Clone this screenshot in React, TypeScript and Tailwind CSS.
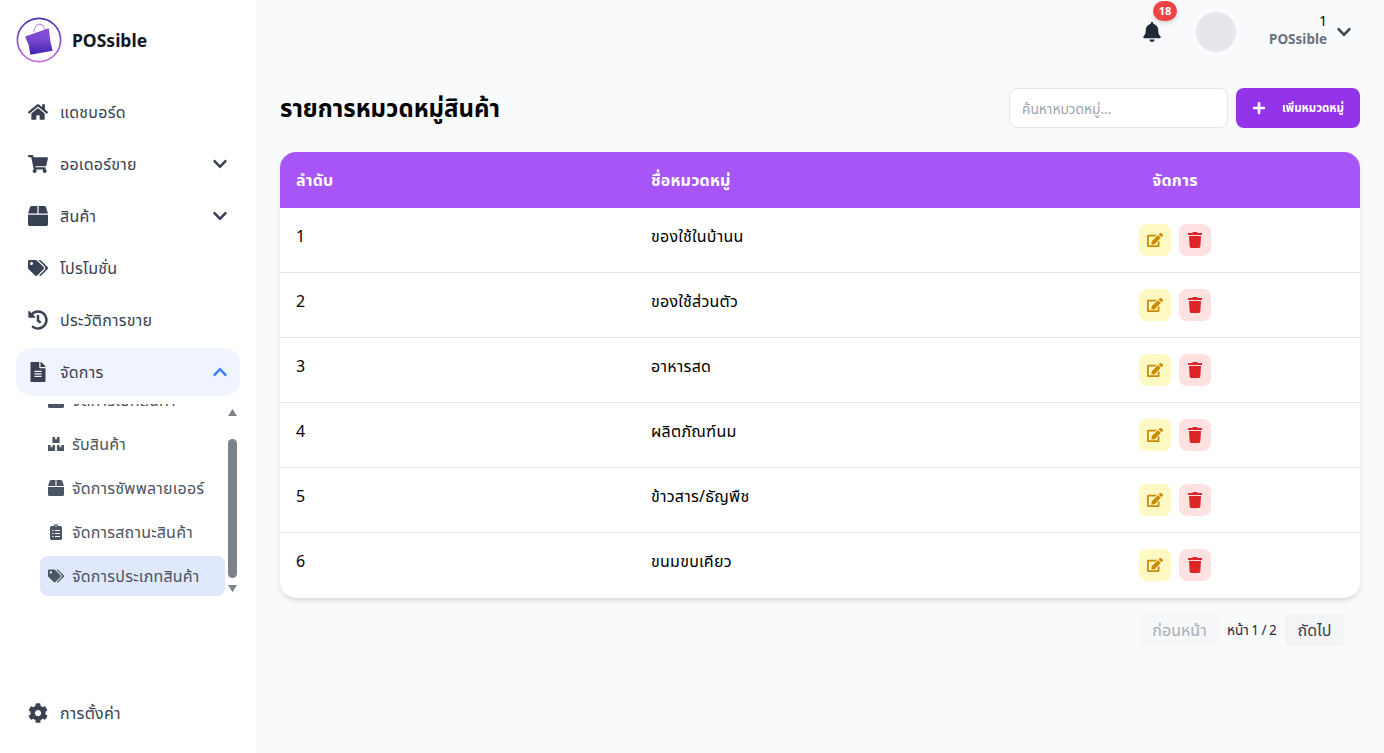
import React from "react";
import { FaHome, FaShoppingCart, FaBox, FaBoxes, FaTags, FaHistory, FaFileAlt, FaChevronDown, FaChevronUp, FaClipboardList, FaCog, FaBell, FaEdit, FaTrash, FaPlus } from "react-icons/fa";

const rows = ["ของใช้ในบ้านน", "ของใช้ส่วนตัว", "อาหารสด", "ผลิตภัณฑ์นม", "ข้าวสาร/ธัญพืช", "ขนมขบเคียว"];

function Item({ icon, label, chevron }: { icon: React.ReactNode; label: string; chevron?: boolean }) {
  return (
    <div className="flex h-12 items-center rounded-2xl px-3 text-[#374151]">
      <span className="flex w-5 justify-center text-xl">{icon}</span>
      <span className="ml-3 flex-1 text-base tracking-[0.25px]">{label}</span>
      {chevron && <FaChevronDown className="text-base" />}
    </div>
  );
}

function Sub({ icon, label, active }: { icon: React.ReactNode; label: string; active?: boolean }) {
  return (
    <div className={`flex h-10 shrink-0 items-center rounded-lg px-2 text-base tracking-[0.2px] text-[#4b5563] ${active ? "bg-[#dfe8fd]" : ""}`}>
      <span className="flex w-4 justify-center text-base">{icon}</span>
      <span className="ml-2 whitespace-nowrap">{label}</span>
    </div>
  );
}

function Actions() {
  return (
    <span className="flex justify-center gap-2">
      <span className="flex h-8 w-8 items-center justify-center rounded-lg bg-[#fef9c3] text-[#ca8a04]"><FaEdit /></span>
      <span className="flex h-8 w-8 items-center justify-center rounded-lg bg-[#fee2e2] text-[#dc2626]"><FaTrash /></span>
    </span>
  );
}

export default function App() {
  return (
    <div className="flex h-[753px] overflow-hidden bg-[#f9fafb] font-['Noto_Sans','Noto_Sans_Thai',sans-serif] text-black">
      <aside className="flex w-64 shrink-0 flex-col bg-white">
        <div className="flex h-20 items-center gap-2.5 pl-4">
          <svg viewBox="0 0 46 46" className="h-[46px] w-[46px]">
            <defs>
              <linearGradient id="ring" x1="0" y1="0" x2="0" y2="1">
                <stop offset="0" stopColor="#4c2db5" />
                <stop offset="1" stopColor="#c86de0" />
              </linearGradient>
              <linearGradient id="bag" x1="0" y1="0" x2="0" y2="1">
                <stop offset="0" stopColor="#a263e6" />
                <stop offset="1" stopColor="#3f22b0" />
              </linearGradient>
            </defs>
            <circle cx="23" cy="23" r="21.6" fill="#fff" stroke="url(#ring)" strokeWidth="1.7" />
            <path d="M17.7 15 C19 8 24 5 27 9 L29.5 13" fill="none" stroke="#b98ae8" strokeWidth="1.1" />
            <path d="M9.3 19.5 L32.7 11.2 L34.5 25 L36.7 33.8 L14.3 37.8 L12.7 28 Z" fill="url(#bag)" />
            <path d="M9.3 19.5 L32.7 11.2 L33.4 17 L11 25 Z" fill="#7a45cf" opacity="0.55" />
          </svg>
          <span className="text-[17.5px] font-bold text-[#111827]">POSsible</span>
        </div>
        <nav className="mt-2 flex flex-col gap-1 px-4">
          <Item icon={<FaHome />} label="แดชบอร์ด" />
          <Item icon={<FaShoppingCart />} label="ออเดอร์ขาย" chevron />
          <Item icon={<FaBox />} label="สินค้า" chevron />
          <Item icon={<FaTags />} label="โปรโมชั่น" />
          <Item icon={<FaHistory />} label="ประวัติการขาย" />
          <div className="flex h-12 items-center rounded-2xl bg-[#eff4fe] px-3 text-[#374151]">
            <span className="flex w-5 justify-center text-xl"><FaFileAlt /></span>
            <span className="ml-3 flex-1 text-base tracking-[0.25px]">จัดการ</span>
            <FaChevronUp className="text-base text-[#3b82f6]" />
          </div>
        </nav>
        <div className="relative mt-2 ml-10 h-[192px] w-[197px]">
          <div className="flex h-full w-[185px] flex-col justify-end gap-1 overflow-hidden">
            <Sub icon={<FaBox />} label="จัดการเบิกสินค้า" />
            <Sub icon={<FaBoxes />} label="รับสินค้า" />
            <Sub icon={<FaBox />} label="จัดการซัพพลายเออร์" />
            <Sub icon={<FaClipboardList />} label="จัดการสถานะสินค้า" />
            <Sub icon={<FaTags />} label="จัดการประเภทสินค้า" active />
          </div>
          <svg viewBox="0 0 9 7" className="absolute top-[5px] right-0 h-[7px] w-[9px] fill-[#7c8289]"><polygon points="4.5,0 9,7 0,7" /></svg>
          <div className="absolute top-[35px] right-0 h-[139px] w-[9px] rounded-full bg-[#7c8289]" />
          <svg viewBox="0 0 9 7" className="absolute top-[181px] right-0 h-[7px] w-[9px] fill-[#7c8289]"><polygon points="0,0 9,0 4.5,7" /></svg>
        </div>
        <div className="mt-auto mb-4 px-4">
          <Item icon={<FaCog />} label="การตั้งค่า" />
        </div>
      </aside>
      <main className="flex min-w-0 flex-1 flex-col">
        <header className="flex h-16 items-center justify-end pr-8">
          <div className="relative text-xl text-[#1f2937]">
            <FaBell />
            <span className="absolute -top-[21px] -right-[15px] flex h-5 w-6 items-center justify-center rounded-full bg-[#ef4444] text-[11px] font-bold text-white shadow-md">18</span>
          </div>
          <div className="ml-[34px] h-10 w-10 rounded-full bg-[#e5e7eb]" />
          <div className="ml-[31px] -mt-1 flex w-[60px] flex-col items-end text-[13.5px] leading-[18px]">
            <span>1</span>
            <span className="font-bold text-[#6b7280]">POSsible</span>
          </div>
          <FaChevronDown className="ml-[9px] text-base text-[#374151]" />
        </header>
        <div className="px-6 pt-6">
          <div className="flex items-center justify-between">
            <h1 className="text-2xl font-bold">รายการหมวดหมู่สินค้า</h1>
            <div className="flex gap-2">
              <input placeholder="ค้นหาหมวดหมู่..." className="h-10 w-[219px] rounded-lg border border-[#e5e7eb] bg-white px-3 text-[13.7px] placeholder:text-[#9ca3af]" />
              <button className="flex h-10 w-[124px] items-center justify-center gap-4 rounded-lg bg-[#9333ea] text-[11.5px] font-bold text-white">
                <FaPlus className="text-sm" />เพิ่มหมวดหมู่
              </button>
            </div>
          </div>
          <div className="mt-6 overflow-hidden rounded-2xl bg-white shadow-md">
            <div className="grid h-14 grid-cols-[355px_1fr_338px] items-center bg-[#a855f7] px-4 font-bold tracking-[0.2px] text-white">
              <span>ลำดับ</span>
              <span>ชื่อหมวดหมู่</span>
              <span className="text-center">จัดการ</span>
            </div>
            {rows.map((r, i) => (
              <div key={r} className={`grid h-[65px] grid-cols-[355px_1fr_338px] items-start px-4 pt-4 ${i < 5 ? "border-b border-[#e5e7eb]" : ""}`}>
                <span>{i + 1}</span>
                <span className="tracking-[0.25px]">{r}</span>
                <Actions />
              </div>
            ))}
          </div>
          <div className="mt-4 flex items-center justify-end gap-2 pr-4">
            <span className="flex h-8 w-[79px] items-center justify-center rounded bg-[#f6f7f9] text-[#a9adb5]">ก่อนหน้า</span>
            <span className="w-[50px] whitespace-nowrap text-[13.5px] text-[#1f2937] [word-spacing:-1px]">หน้า 1 / 2</span>
            <span className="flex h-8 w-[59px] items-center justify-center rounded bg-[#f3f4f6] text-[#374151]">ถัดไป</span>
          </div>
        </div>
      </main>
    </div>
  );
}
